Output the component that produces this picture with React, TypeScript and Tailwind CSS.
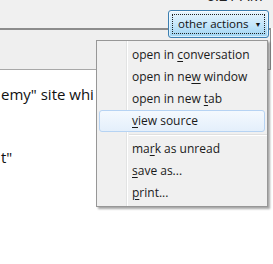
/**
 * App.tsx — mail message toolbar with an open "other actions" menu.
 */

const menuFont = { fontFamily: '"Open Sans", "Noto Sans", sans-serif' };

type Item = { before: string; key: string; after: string; active?: boolean };

const groupOne: Item[] = [
  { before: 'open in ', key: 'c', after: 'onversation' },
  { before: 'open in ne', key: 'w', after: ' window' },
  { before: 'open in new ', key: 't', after: 'ab' },
  { before: '', key: 'v', after: 'iew source', active: true },
];

const groupTwo: Item[] = [
  { before: 'ma', key: 'r', after: 'k as unread' },
  { before: '', key: 's', after: 'ave as...' },
  { before: '', key: 'p', after: 'rint...' },
];

function MenuItem({ item }: { item: Item }) {
  return (
    <div
      className={
        item.active
          ? 'mx-[2px] flex h-[22px] items-center rounded-[3px] border border-[#b6d3f3] bg-gradient-to-b from-[#f4f9fe] to-[#e4effb] pl-[32px] text-[12px] text-[#1a1a1a]'
          : 'mx-[2px] flex h-[22px] items-center border border-transparent pl-[32px] text-[12px] text-[#1a1a1a]'
      }
    >
      <span className="whitespace-nowrap">
        {item.before}
        <span className="underline underline-offset-2">{item.key}</span>
        {item.after}
      </span>
    </div>
  );
}

export default function App() {
  return (
    <div
      className="relative h-[264px] w-[273px] overflow-hidden bg-white"
      style={menuFont}
    >
      {/* Header strip with time and button */}
      <div className="h-[41px] bg-[#f0f0f0]">
        <div className="-mt-[13px] pr-[10px] text-right text-[15px] leading-[17px] text-[#222]">
          6:21 AM
        </div>
        <div className="flex justify-end pr-[4px] pt-[6px]">
          <button className="h-[28px] w-[101px] rounded-[3px] border border-[#3c7fb1] bg-gradient-to-b from-[#eaf6fd] via-[#c6e7fb] to-[#9fd5f3] p-[3px] shadow-[inset_0_0_0_1px_rgba(255,255,255,0.6)]">
            <span className="flex h-full w-full items-center gap-[6px] whitespace-nowrap border border-dotted border-[#222] pl-[5px] text-[11.5px] text-[#111]">
              <span>other actions</span>
              <span className="text-[7px] leading-none">▼</span>
            </span>
          </button>
        </div>
      </div>

      {/* Grey panel under the toolbar */}
      <div className="h-[42px] w-[271px] border-r border-t-2 border-b border-[#8c8c8c] border-b-[#a8a8a8] bg-[#efefef]" />

      {/* Message body */}
      <div className="pl-[1px] pt-[14px] text-[15px] leading-[20px] text-[#111]">
        <p className="whitespace-nowrap">emy" site whi</p>
        <p className="mt-[43px]">t"</p>
      </div>

      {/* Dropdown menu */}
      <div className="absolute left-[96px] top-[40px] w-[172px] border border-[#979797] bg-[#f0f0f0] pb-[2px] pt-[3px] shadow-[2px_2px_2px_rgba(0,0,0,0.35)]">
        <div className="absolute bottom-0 left-[29px] top-0 w-[2px] border-l border-[#e2e3e3] bg-white" />
        <div className="relative">
          {groupOne.map((item) => (
            <MenuItem key={item.key + item.after} item={item} />
          ))}
          <div className="flex h-[6px] items-center pl-[32px]">
            <div className="h-[2px] w-full border-t border-[#e0e0e0] bg-white" />
          </div>
          {groupTwo.map((item) => (
            <MenuItem key={item.key + item.after} item={item} />
          ))}
        </div>
      </div>
    </div>
  );
}
